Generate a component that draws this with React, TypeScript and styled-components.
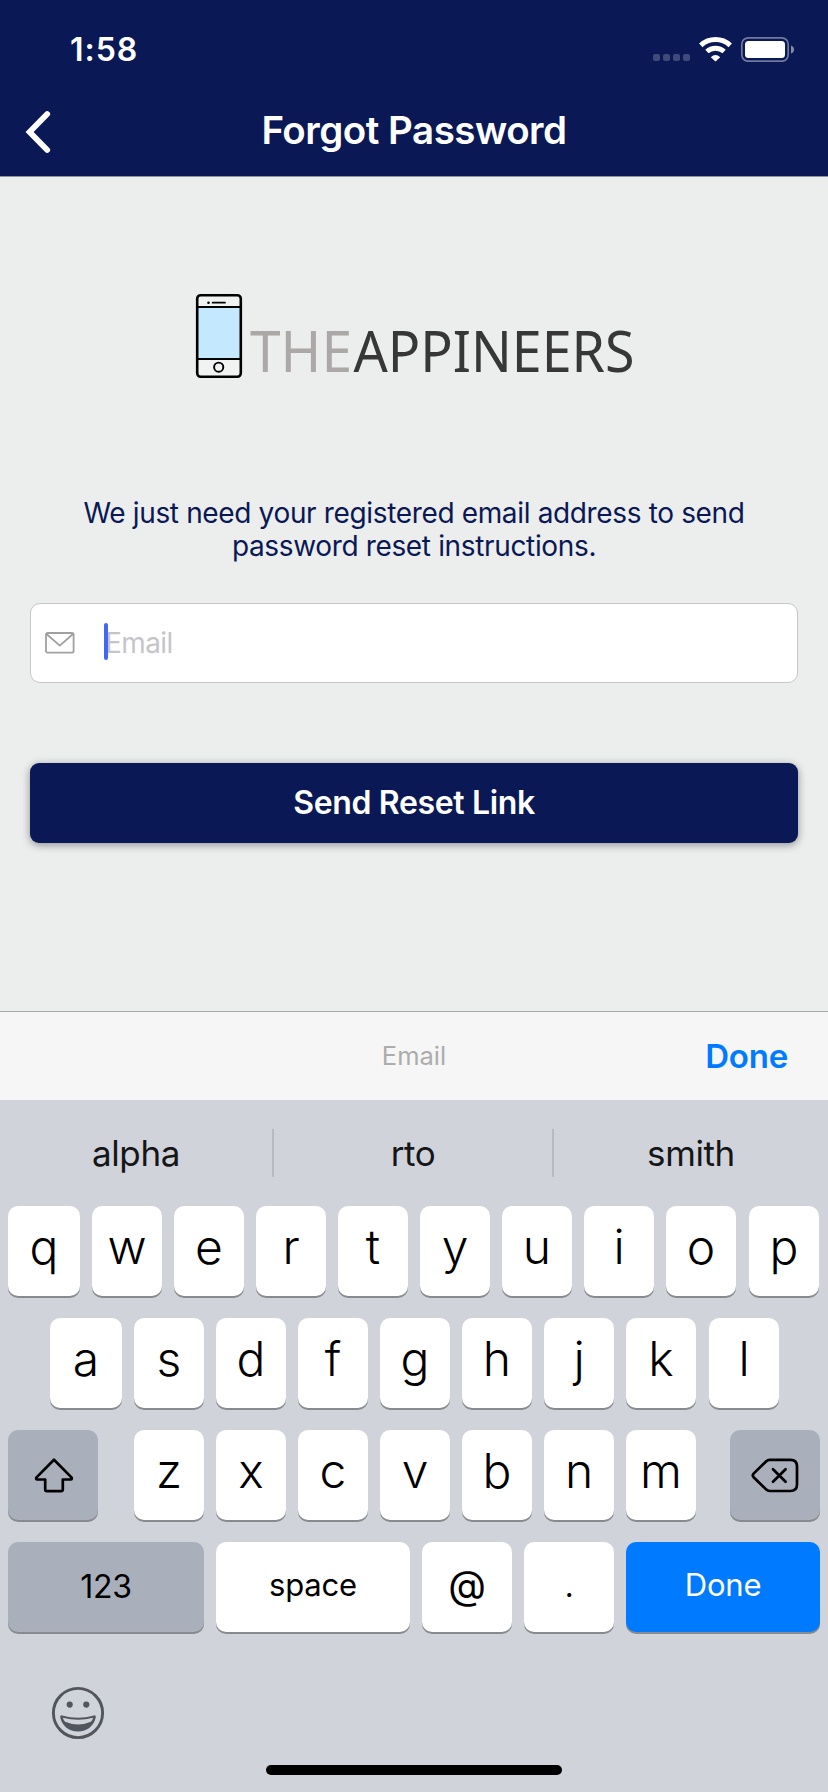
import React from "react";
import styled, { createGlobalStyle, css } from "styled-components";

const NAVY = "#0a1855";
const BLUE = "#007aff";

const GlobalStyle = createGlobalStyle`
  * { box-sizing: border-box; }
  body { margin: 0; background: #eceeed; }
  button { font: inherit; border: 0; padding: 0; margin: 0; }
`;

const Screen = styled.div`
  width: 828px;
  height: 1792px;
  display: flex;
  flex-direction: column;
  overflow: hidden;
  background: #eceeed;
  font-family: Inter, "Liberation Sans", sans-serif;
`;

const Header = styled.header`
  height: 177px;
  background: ${NAVY};
  border-bottom: 1px solid #8f929f;
  color: #fff;
`;

const StatusBar = styled.div`
  height: 88px;
  padding: 12px 34px 0 70px;
  display: flex;
  justify-content: space-between;
`;

const Clock = styled.span`
  font-size: 32px;
  line-height: 75px;
  font-weight: 570;
  letter-spacing: 1px;
`;

const StatusIcons = styled.svg`
  width: 142px;
  height: 26px;
  margin-top: 24px;
`;

const NavBar = styled.nav`
  height: 88px;
  display: grid;
  grid-template-columns: 100px 1fr 100px;
`;

const BackButton = styled.button`
  background: none;
  height: 88px;
  padding-left: 25px;
  display: flex;
  align-items: center;
`;

const Title = styled.h1`
  margin: 0;
  text-align: center;
  font-size: 38.5px;
  line-height: 84px;
  font-weight: 600;
  letter-spacing: -0.5px;
  white-space: nowrap;
`;

const Body = styled.main`
  flex: 1;
  padding: 117px 30px 0;
  display: flex;
  flex-direction: column;
`;

const Logo = styled.svg`
  width: 440px;
  height: 85px;
  margin-left: 166px;
  overflow: visible;
`;

const Instructions = styled.p`
  margin: 118px 0 0;
  color: ${NAVY};
  font-size: 28px;
  line-height: 33px;
  letter-spacing: -0.35px;
  text-align: center;
`;

const Field = styled.label`
  height: 80px;
  margin-top: 40px;
  padding-left: 14px;
  display: flex;
  align-items: center;
  background: #fff;
  border: 1px solid #c6c6c8;
  border-radius: 10px;
`;

const Caret = styled.span`
  width: 4px;
  height: 37px;
  margin: -3px -3px 0 29px;
  border-radius: 2px;
  background: #4169f0;
  z-index: 1;
`;

const Placeholder = styled.span`
  color: #c5c5c9;
  font-size: 28px;
  line-height: 78px;
  letter-spacing: -0.6px;
`;

const SubmitButton = styled.button`
  height: 80px;
  margin-top: 80px;
  border-radius: 9px;
  background: ${NAVY};
  color: #fff;
  box-shadow: 0 2px 9px rgba(0, 0, 0, 0.4);
  && { font-size: 32px; font-weight: 600; letter-spacing: -0.35px; line-height: 80px; }
`;

const Accessory = styled.div`
  height: 89px;
  border-top: 1px solid #a6a7a8;
  background: #f6f6f6;
  display: grid;
  grid-template-columns: 1fr 200px 1fr;
  align-items: center;
  padding-right: 40px;
  padding-left: 40px;
`;

const AccessoryLabel = styled.span`
  grid-column: 2;
  text-align: center;
  color: #acacac;
  font-size: 25.5px;
  padding-bottom: 2px;
`;

const AccessoryDone = styled.button`
  background: none;
  color: ${BLUE};
  text-align: right;
  && { font-size: 33px; font-weight: 600; letter-spacing: -0.2px; }
`;

const Keyboard = styled.section`
  height: 692px;
  background: #d0d3da;
  display: flex;
  flex-direction: column;
`;

const Suggestions = styled.div`
  height: 106px;
  padding-top: 29px;
  display: grid;
  grid-template-columns: 274px 280px 274px;
`;

const Suggestion = styled.span`
  height: 48px;
  line-height: 48px;
  font-size: 35px;
  font-weight: 380;
  color: #151617;
  text-align: center;
  border-right: 2px solid #b8babf;
  letter-spacing: -0.4px;
  &:last-child { border-right: 0; }
`;

const KeyRow = styled.div<{ $inset?: number }>`
  height: 90px;
  margin-bottom: 22px;
  padding: 0 ${({ $inset = 8 }) => $inset}px;
  display: flex;
  justify-content: space-between;
`;

const Letters = styled.div<{ $nudge?: boolean }>`
  display: flex;
  gap: 12px;
  ${({ $nudge }) => $nudge && css`margin-left: 2px;`}
`;

type KeyTone = "light" | "dark" | "action";

const tones = {
  light: css`background: #fff; color: #000;`,
  dark: css`background: #a9afbb; color: #000;`,
  action: css`background: ${BLUE}; color: #fff;`,
};

const Key = styled.button<{ $width?: number; $tone?: KeyTone; $lift?: number }>`
  width: ${({ $width = 70 }) => $width}px;
  height: 90px;
  padding-bottom: ${({ $lift = 9 }) => $lift}px;
  display: flex;
  align-items: center;
  justify-content: center;
  border-radius: 10px;
  box-shadow: 0 2px 0 #898a8d;
  ${({ $tone = "light" }) => tones[$tone]}
  && { font-size: 48px; font-weight: 365; line-height: 60px; }
`;

const LetterKey = styled(Key)`
  &:nth-child(n + 9):last-child { margin-left: 1px; }
`;

const WordKey = styled(Key)<{ $size?: number; $weight?: number }>`
  && {
    font-size: ${({ $size = 31 }) => $size}px;
    font-weight: ${({ $weight = 390 }) => $weight};
    letter-spacing: -0.2px;
  }
`;

const KeyboardFooter = styled.footer`
  flex: 1;
  display: flex;
  flex-direction: column;
  padding: 32px 0 0 51px;
`;

const HomeIndicator = styled.div`
  width: 296px;
  height: 10px;
  margin: 25px 0 0 215px;
  border-radius: 5px;
  background: #000;
`;

const StatusGlyphs = () => (
  <StatusIcons viewBox="652 36 142 26" fill="#fff">
    {[653, 663, 673, 683].map((x) => (
      <rect key={x} x={x} y="54" width="7" height="7" rx="2" opacity="0.22" />
    ))}
    <g fill="none" stroke="#fff">
      <path d="M700.8 45.3A21.6 21.6 0 0 1 730.2 45.3" strokeWidth="5" />
      <path d="M706.9 51.6A12.7 12.7 0 0 1 724.1 51.6" strokeWidth="4.8" />
    </g>
    <path d="M710.8 57.2Q715.5 52.8 720.2 57.2L715.5 61.5Z" />
    <rect x="741.8" y="37.8" width="46.4" height="23.4" rx="6.5" fill="none" stroke="#fff" strokeOpacity="0.42" strokeWidth="1.7" />
    <rect x="745" y="41" width="40" height="17" rx="3.5" />
    <path d="M791 45.5q3 1 3 4t-3 4z" opacity="0.5" />
  </StatusIcons>
);

const BrandLogo = () => (
  <Logo viewBox="196 294 440 85">
    <rect x="197.2" y="295.2" width="43.6" height="81.6" rx="3.5" fill="#f1f3f2" />
    <rect x="198" y="307" width="42" height="52" fill="#c4e9fe" />
    <g fill="none" stroke="#000">
      <rect x="197.2" y="295.2" width="43.6" height="81.6" rx="3.5" strokeWidth="2.6" />
      <path d="M197 307H241M197 359H241" strokeWidth="1.9" />
      <path d="M212.6 302.7H225" strokeWidth="1.7" strokeLinecap="round" />
      <circle cx="218.7" cy="367.2" r="4.6" strokeWidth="1.9" />
    </g>
    <circle cx="208.5" cy="302.7" r="1.3" />
    <g fontFamily='"Noto Sans", sans-serif' fontSize="57">
      <text x="250" y="371.7" fill="#ada8a8" textLength="102" lengthAdjust="spacingAndGlyphs">THE</text>
      <text x="353.5" y="371.7" fill="#373737" textLength="281" lengthAdjust="spacingAndGlyphs">APPINEERS</text>
    </g>
  </Logo>
);

const EnvelopeIcon = () => (
  <svg width="30" height="22" viewBox="0 0 30 22" fill="none" stroke="#a0a0a0" strokeWidth="1.8" strokeLinejoin="round">
    <rect x="1" y="1" width="27.6" height="19.6" rx="1.6" />
    <path d="M1.5 2L14.8 13.6L28 2" />
  </svg>
);

const ShiftIcon = () => (
  <svg width="42" height="38" viewBox="-2 -2 42 38" fill="none" stroke="#000" strokeWidth="2.7" strokeLinejoin="round">
    <path d="M20 1.8L2.3 19.6Q1.7 21.5 3.2 21.5H11.2V31.5Q11.2 33.2 13 33.2H27Q28.8 33.2 28.8 31.5V21.5H36.8Q38.3 21.5 37.7 19.6Z" />
  </svg>
);

const DeleteIcon = () => (
  <svg width="48" height="38" viewBox="0 -2 48 38" fill="none" stroke="#000" strokeWidth="2.7" strokeLinecap="round" strokeLinejoin="round">
    <path d="M18.5 1.8H39.5Q46 1.8 46 8.3V26.5Q46 33 39.5 33H18.5Q16.8 33 15.3 31.6L2.6 19.2Q1 17.4 2.6 15.6L15.3 3.2Q16.8 1.8 18.5 1.8Z" />
    <path d="M22 11.2L34.6 23.8M34.6 11.2L22 23.8" />
  </svg>
);

const EmojiIcon = () => (
  <svg width="54" height="54" viewBox="0 0 54 54">
    <circle cx="27" cy="27" r="24.6" fill="none" stroke="#51555d" strokeWidth="2.9" />
    <circle cx="18.7" cy="18.6" r="3.1" fill="#51555d" />
    <circle cx="35.3" cy="18.6" r="3.1" fill="#51555d" />
    <path d="M9.2 31.2Q9 29 11 29.4Q27 34 43 29.4Q45 29 44.8 31.2C42.8 40 36.2 45.4 27 45.4S11.2 40 9.2 31.2Z" fill="#51555d" />
    <path d="M11.8 31.7Q27 36 42.2 31.7Q41.4 34.2 39.9 35.8Q27 41.4 14.1 35.8Q12.6 34.2 11.8 31.7Z" fill="#d0d3da" />
  </svg>
);

const LetterKeys = ({ letters, nudge }: { letters: string; nudge?: boolean }) => (
  <Letters $nudge={nudge}>
    {letters.split("").map((letter, i) => (
      <LetterKey key={letter} $width={i === 0 && letters.length > 7 ? 72 : 70}>
        {letter}
      </LetterKey>
    ))}
  </Letters>
);

export default function App() {
  return (
    <Screen>
      <GlobalStyle />
      <Header>
        <StatusBar>
          <Clock>1:58</Clock>
          <StatusGlyphs />
        </StatusBar>
        <NavBar>
          <BackButton aria-label="Back">
            <svg width="26" height="44" viewBox="0 0 26 44" fill="none" stroke="#fff" strokeWidth="5.8" strokeLinecap="round" strokeLinejoin="miter">
              <path d="M22.2 4L4.6 22L22.2 40" />
            </svg>
          </BackButton>
          <Title>Forgot Password</Title>
        </NavBar>
      </Header>
      <Body>
        <BrandLogo />
        <Instructions>
          We just need your registered email address to send
          <br />
          password reset instructions.
        </Instructions>
        <Field>
          <EnvelopeIcon />
          <Caret />
          <Placeholder>Email</Placeholder>
        </Field>
        <SubmitButton>Send Reset Link</SubmitButton>
      </Body>
      <Accessory>
        <AccessoryLabel>Email</AccessoryLabel>
        <AccessoryDone>Done</AccessoryDone>
      </Accessory>
      <Keyboard>
        <Suggestions>
          {["alpha", "rto", "smith"].map((word) => (
            <Suggestion key={word}>{word}</Suggestion>
          ))}
        </Suggestions>
        <KeyRow>
          <LetterKeys letters="qwertyuiop" />
        </KeyRow>
        <KeyRow $inset={50}>
          <LetterKeys letters="asdfghjkl" />
        </KeyRow>
        <KeyRow>
          <Key $width={90} $tone="dark" $lift={0} aria-label="Shift"><ShiftIcon /></Key>
          <LetterKeys letters="zxcvbnm" nudge />
          <Key $width={90} $tone="dark" $lift={0} aria-label="Delete"><DeleteIcon /></Key>
        </KeyRow>
        <KeyRow>
          <WordKey $width={196} $tone="dark" $lift={0} $size={32}>123</WordKey>
          <WordKey $width={194} $lift={4}>space</WordKey>
          <WordKey $width={90} $lift={4} $size={39} $weight={430}>@</WordKey>
          <WordKey $width={90} $lift={2}>.</WordKey>
          <WordKey $width={194} $tone="action" $lift={4}>Done</WordKey>
        </KeyRow>
        <KeyboardFooter>
          <EmojiIcon />
          <HomeIndicator />
        </KeyboardFooter>
      </Keyboard>
    </Screen>
  );
}
